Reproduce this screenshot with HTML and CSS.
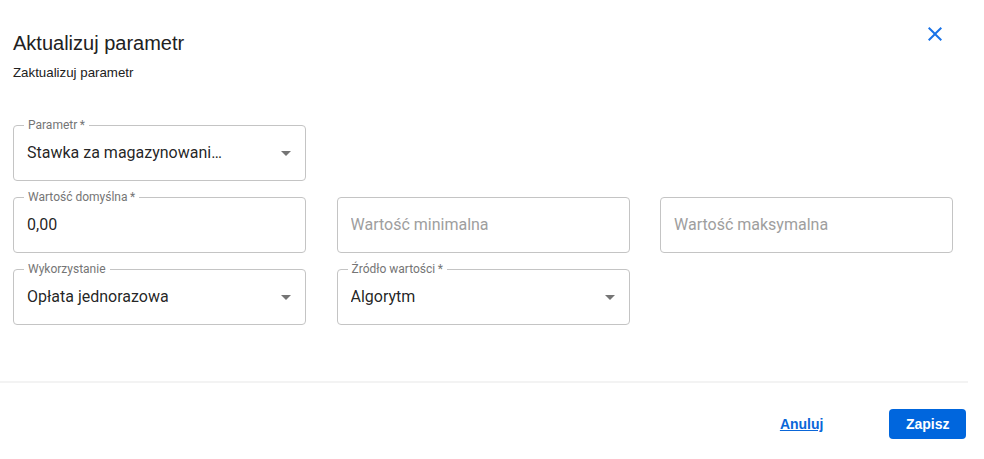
FILE: index.html
```html
<!DOCTYPE html>
<html lang="pl">
<head>
<meta charset="utf-8">
<title>Aktualizuj parametr</title>
<link rel="stylesheet" href="styles.css">
</head>
<body>
<div class="dialog">
  <div class="header">
    <div class="titles">
      <h1 class="title">Aktualizuj parametr</h1>
      <p class="subtitle">Zaktualizuj parametr</p>
    </div>
    <button class="close" type="button" aria-label="Zamknij">
      <svg viewBox="0 0 24 24" width="24" height="24"><path d="M19 6.41 17.59 5 12 10.59 6.41 5 5 6.41 10.59 12 5 17.59 6.41 19 12 13.41 17.59 19 19 17.59 13.41 12z"/></svg>
    </button>
  </div>

  <div class="form">
    <div class="field">
      <span class="label">Parametr&thinsp;*</span>
      <span class="value">Stawka za magazynowani…</span>
      <svg class="arrow" viewBox="0 0 24 24" width="24" height="24"><path d="M7 10l5 5 5-5z"/></svg>
    </div>
    <div class="empty"></div>
    <div class="empty"></div>

    <div class="field">
      <span class="label">Wartość domyślna&thinsp;*</span>
      <span class="value">0,00</span>
    </div>
    <div class="field">
      <span class="value placeholder">Wartość minimalna</span>
    </div>
    <div class="field">
      <span class="value placeholder">Wartość maksymalna</span>
    </div>

    <div class="field">
      <span class="label">Wykorzystanie</span>
      <span class="value">Opłata jednorazowa</span>
      <svg class="arrow" viewBox="0 0 24 24" width="24" height="24"><path d="M7 10l5 5 5-5z"/></svg>
    </div>
    <div class="field">
      <span class="label">Źródło wartości&thinsp;*</span>
      <span class="value">Algorytm</span>
      <svg class="arrow" viewBox="0 0 24 24" width="24" height="24"><path d="M7 10l5 5 5-5z"/></svg>
    </div>
    <div class="empty"></div>
  </div>

  <div class="divider"></div>

  <div class="footer">
    <a class="cancel" href="#">Anuluj</a>
    <button class="save" type="button">Zapisz</button>
  </div>
</div>
</body>
</html>
```

FILE: styles.css
```css
html, body {
  margin: 0;
  padding: 0;
  background: #ffffff;
}

body {
  font-family: "Liberation Sans", Arial, sans-serif;
  color: #212121;
}

.dialog {
  width: 984px;
  height: 459px;
  overflow: hidden;
}

.header {
  display: flex;
  align-items: flex-start;
  justify-content: space-between;
  padding: 0 37px 0 13px;
}

.titles {
  padding-top: 31px;
}

.title {
  margin: 0;
  font-size: 20px;
  line-height: 24px;
  font-weight: 400;
  color: #212121;
}

.subtitle {
  margin: 10px 0 0;
  font-size: 13.3px;
  line-height: 16px;
  color: #212121;
}

.close {
  margin-top: 22px;
  padding: 0;
  border: 0;
  background: none;
  width: 24px;
  height: 24px;
  cursor: pointer;
}

.close svg {
  display: block;
  fill: #1a73e8;
}

.form {
  margin-top: 44px;
  padding-left: 13px;
  display: grid;
  grid-template-columns: 293px 293px 293px;
  column-gap: 30.5px;
  row-gap: 16px;
}

.field {
  position: relative;
  box-sizing: border-box;
  height: 56px;
  border: 1px solid #c4c4c4;
  border-radius: 4px;
  display: flex;
  align-items: center;
  padding: 0 7px 0 13px;
  font-family: Roboto, "Liberation Sans", sans-serif;
}

.label {
  position: absolute;
  left: 10px;
  top: -7px;
  padding: 0 4px;
  background: #ffffff;
  font-size: 12px;
  line-height: 12px;
  color: #757575;
  white-space: nowrap;
}

.value {
  flex: 1;
  font-size: 16px;
  line-height: 20px;
  color: rgba(0, 0, 0, 0.87);
  white-space: nowrap;
  overflow: hidden;
}

.placeholder {
  color: #9e9e9e;
}

.arrow {
  flex: none;
  display: block;
  fill: #757575;
}

.divider {
  margin-top: 56px;
  width: 968px;
  height: 2px;
  background: #f3f3f3;
}

.footer {
  margin-top: 26px;
  display: flex;
  justify-content: flex-end;
  align-items: center;
  padding-right: 18px;
}

.cancel {
  margin-right: 66px;
  font-size: 14px;
  font-weight: 700;
  color: #0a66d8;
  text-decoration: underline;
}

.save {
  height: 30px;
  padding: 0 16.5px;
  border: 0;
  border-radius: 4px;
  background: #0066dd;
  color: #ffffff;
  font-family: "Liberation Sans", Arial, sans-serif;
  font-size: 14px;
  font-weight: 700;
  cursor: pointer;
}
```
